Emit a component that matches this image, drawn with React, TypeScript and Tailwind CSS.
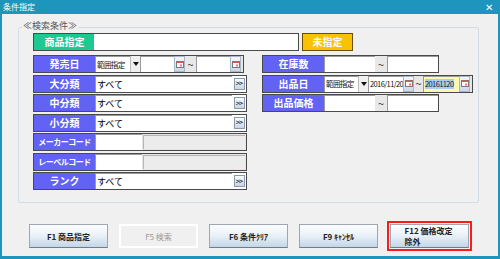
import React from "react";

const font = { fontFamily: '"Noto Sans CJK JP", "Noto Sans", sans-serif' };

const Label = ({ text, green, small }: { text: string; green?: boolean; small?: boolean }) => (
  <div
    className={`w-[61px] h-full flex items-center justify-center text-white font-bold leading-none whitespace-nowrap overflow-hidden ${
      small ? "text-[8px] tracking-[-0.5px]" : "text-[10px]"
    } ${green ? "bg-[#1ec891]" : "bg-[#6262f4]"}`}
  >
    {text}
  </div>
);

const Input = ({
  w,
  text,
  narrow,
}: {
  w: string;
  text?: string;
  narrow?: boolean;
}) => (
  <div
    className={`${w} h-full border-t border-l border-[#9a9a9a] flex items-center pl-[1px] leading-none text-[#111] bg-white whitespace-nowrap overflow-hidden ${
      narrow ? "text-[7.5px] tracking-[-0.6px]" : "text-[9px]"
    }`}
  >
    {text}
  </div>
);

const CalBtn = () => (
  <div className="w-[11px] h-full shrink-0 flex items-center justify-center bg-gradient-to-b from-[#f4f8fb] to-[#c9d9e8] border border-[#a8b8c8]">
    <svg width="8" height="7" viewBox="0 0 8 7">
      <rect x="0.5" y="0.5" width="7" height="6" fill="#fff" stroke="#777" />
      <rect x="0.5" y="0.5" width="7" height="1.5" fill="#d55" />
      <rect x="4" y="3.5" width="2" height="2" fill="#e77" />
    </svg>
  </div>
);

const Arrow = () => (
  <div className="w-[10px] h-full shrink-0 flex items-center justify-center bg-[#f0f0f0] border-l border-[#bbb]">
    <svg width="6" height="4" viewBox="0 0 6 4">
      <path d="M0 0h6L3 4z" fill="#111" />
    </svg>
  </div>
);

const Tilde = ({ w = "w-[11px]" }: { w?: string }) => (
  <div className={`${w} h-full shrink-0 flex items-center justify-center bg-[#e8e8e8] text-[11px] leading-none text-[#333] overflow-hidden`}>
    ~
  </div>
);

const MoreBtn = () => (
  <div className="w-[11px] h-[12px] flex items-center justify-center bg-gradient-to-b from-[#f8fbfd] to-[#c6d6e6] border border-[#8a9aaa] text-[7px] font-bold leading-none text-[#222] tracking-[-1px] whitespace-nowrap">
    &gt;&gt;
  </div>
);

const Row = ({ children }: { children: React.ReactNode }) => (
  <div className="inline-flex h-[18px] border border-[#4a4a4a] bg-[#e6e6e6] self-start">
    {children}
  </div>
);

const SelectRow = ({ label }: { label: string }) => (
  <Row>
    <Label text={label} />
    <div className="w-[137px] h-full flex items-center bg-white border-t border-l border-[#9a9a9a] text-[9px] leading-none pl-[1px] whitespace-nowrap">
      すべて
    </div>
    <div className="w-[14px] h-full flex items-center justify-center bg-white">
      <MoreBtn />
    </div>
  </Row>
);

const CodeRow = ({ label }: { label: string }) => (
  <Row>
    <Label text={label} small />
    <Input w="w-[47px]" />
    <div className="w-[104px] h-full p-[1px] bg-[#e6e6e6]">
      <div className="w-full h-full bg-[#ececec] border-t border-l border-[#b5b5b5]" />
    </div>
  </Row>
);

const FnButton = ({
  children,
  disabled,
}: {
  children: React.ReactNode;
  disabled?: boolean;
}) => (
  <div
    className={`w-[79px] h-[24px] flex items-center justify-center text-[8px] leading-[11px] whitespace-nowrap ${
      disabled
        ? "bg-[#f0f0f0] border-2 border-white text-[#9a9a9a]"
        : "bg-gradient-to-b from-[#fdfeff] via-[#e8f0f7] to-[#c3d6e8] border border-[#9aa8b5] border-b-[#707c88] text-[#222] font-bold"
    }`}
  >
    {children}
  </div>
);

export default function App() {
  return (
    <div className="w-[500px] h-[259px] bg-[#1d95bd] flex flex-col" style={font}>
      <div className="h-[14px] flex items-center justify-between px-[3px] text-white text-[8px] leading-none">
        <span>条件指定</span>
        <span className="text-[10px] mr-[4px]">✕</span>
      </div>
      <div className="flex-1 mx-[2px] mb-[3px] bg-[#f0f0f0] flex flex-col">
        <div className="relative mt-[13px] ml-[16px] w-[461px] h-[176px] border border-[#d3dde4] rounded-[2px] pl-[14px] pt-[5px] flex flex-col">
          <div className="absolute -top-[7px] left-[3px] bg-[#f0f0f0] px-[1px] text-[9px] leading-none text-[#555] whitespace-nowrap">
            ≪検索条件≫
          </div>
          <div className="flex h-[18px]">
            <div className="w-[61px] h-full border border-[#4a4a4a]">
              <Label text="商品指定" green />
            </div>
            <div className="w-[205px] h-full bg-white border border-[#4a4a4a] border-l-0" />
            <div className="ml-[3px] w-[51px] h-full bg-[#f8c200] border border-[#6b4e00] flex items-center justify-center text-white font-bold text-[10px] leading-none whitespace-nowrap">
              未指定
            </div>
          </div>
          <div className="flex mt-[4px]">
            <div className="w-[214px] flex flex-col gap-[1.5px]">
              <Row>
                <Label text="発売日" />
                <Input w="w-[35px]" text="範囲指定" narrow />
                <Arrow />
                <Input w="w-[34px]" />
                <CalBtn />
                <Tilde />
                <Input w="w-[34px]" />
                <CalBtn />
                <div className="w-[2px]" />
              </Row>
              <SelectRow label="大分類" />
              <SelectRow label="中分類" />
              <SelectRow label="小分類" />
              <CodeRow label="メーカーコード" />
              <CodeRow label="レーベルコード" />
              <SelectRow label="ランク" />
            </div>
            <div className="ml-[15px] w-[212px] flex flex-col gap-[1.5px]">
              <Row>
                <Label text="在庫数" />
                <Input w="w-[51px]" />
                <Tilde w="w-[12px]" />
                <Input w="w-[51px]" />
              </Row>
              <Row>
                <Label text="出品日" />
                <Input w="w-[34px]" text="範囲指定" narrow />
                <Arrow />
                <Input w="w-[35px]" text="2016/11/20" narrow />
                <CalBtn />
                <Tilde w="w-[9px]" />
                <div className="w-[36px] h-full bg-[#fff8b0] border-t border-l border-[#9a9a9a] flex items-center pl-[1px] overflow-hidden">
                  <span className="bg-[#a9cdf0] text-[7.5px] tracking-[-0.6px] leading-[10px] text-[#222] whitespace-nowrap">
                    20161120
                  </span>
                </div>
                <CalBtn />
                <div className="w-[2px]" />
              </Row>
              <Row>
                <Label text="出品価格" />
                <Input w="w-[51px]" />
                <Tilde w="w-[12px]" />
                <Input w="w-[51px]" />
              </Row>
            </div>
          </div>
        </div>
        <div className="flex items-center mt-[18px] ml-[27px] gap-[11px]">
          <FnButton>F1 商品指定</FnButton>
          <FnButton disabled>F5 検索</FnButton>
          <FnButton>F6 条件ｸﾘｱ</FnButton>
          <FnButton>F9 ｷｬﾝｾﾙ</FnButton>
          <div className="-ml-[2px] p-[1px] border-2 border-[#ff1a1a]">
            <FnButton>
              <span className="text-left w-[50px]">
                F12 価格改定
                <br />
                除外
              </span>
            </FnButton>
          </div>
        </div>
      </div>
    </div>
  );
}
